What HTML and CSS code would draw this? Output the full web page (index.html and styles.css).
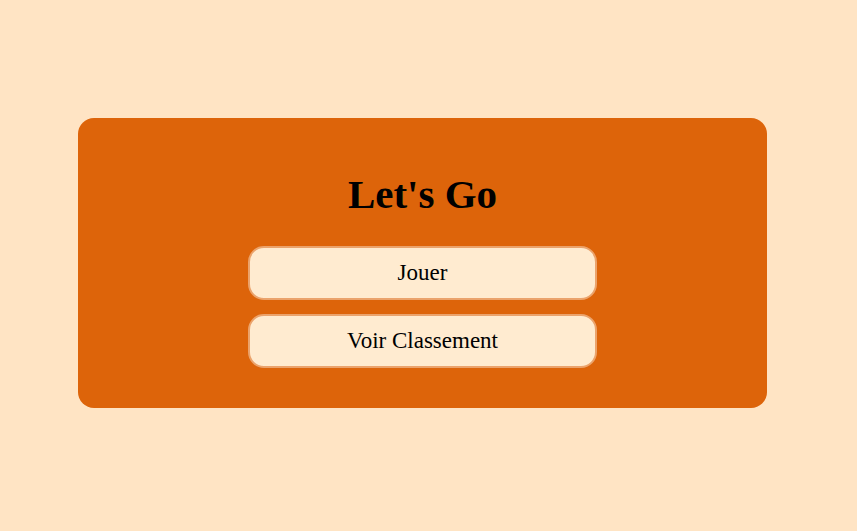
FILE: index.html
```html
<!DOCTYPE html>
<html>
<head>
<meta charset="utf-8">
<link rel="stylesheet" href="styles.css">
</head>
<body>
<div class="page">
  <div class="card">
    <h1 class="title">Let's Go</h1>
    <div class="actions">
      <button class="btn">Jouer</button>
      <button class="btn">Voir Classement</button>
    </div>
  </div>
</div>
</body>
</html>
```
FILE: styles.css
```css
html, body {
  margin: 0;
  padding: 0;
  background: #ffe4c4;
  font-family: "Liberation Serif", "Times New Roman", serif;
}
.page {
  height: 531px;
  display: flex;
  align-items: center;
}
.card {
  box-sizing: border-box;
  margin-left: 78px;
  width: 689px;
  height: 290px;
  margin-top: -5px;
  background: #dd640a;
  border-radius: 16px;
  padding-top: 53px;
  display: flex;
  flex-direction: column;
  align-items: center;
}
.title {
  margin: 0;
  font-size: 41px;
  line-height: 46px;
  font-weight: bold;
  color: #000;
}
.actions {
  margin-top: 29px;
  display: flex;
  flex-direction: column;
  gap: 14px;
}
.btn {
  box-sizing: border-box;
  width: 349px;
  height: 54px;
  background: #ffebd0;
  border: 2px solid #eba36c;
  border-radius: 16px;
  font-family: "Liberation Serif", "Times New Roman", serif;
  font-size: 23px;
  color: #000;
}
```
